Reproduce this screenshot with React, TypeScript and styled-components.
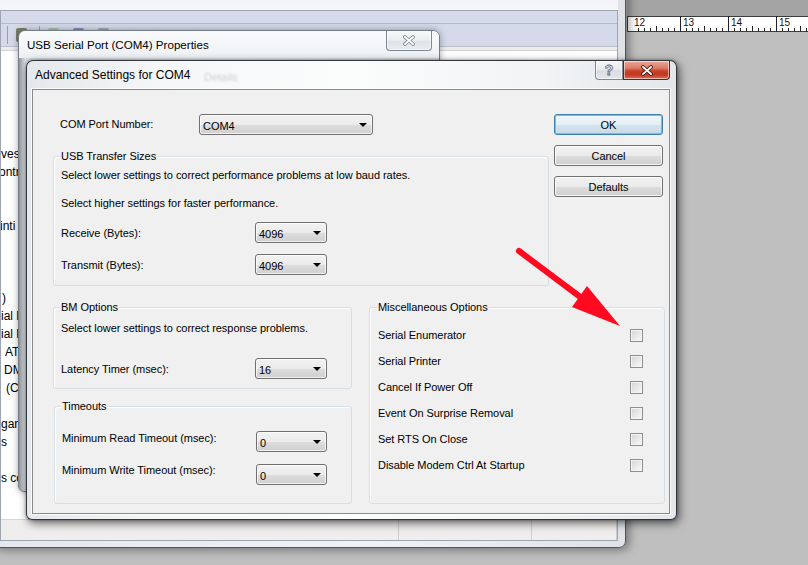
import React from 'react';
import styled, { createGlobalStyle } from 'styled-components';

const GlobalStyle = createGlobalStyle`
  *, *::before, *::after { box-sizing: border-box; }
  html, body { margin: 0; padding: 0; }
  body {
    background: #bfbfbf;
    font-family: 'Liberation Sans', Arial, sans-serif;
    font-size: 11px;
    color: #000;
  }
`;

const Desktop = styled.div`
  position: relative;
  width: 808px;
  height: 565px;
  overflow: hidden;
  background: #bfbfbf;
`;

/* document window with its ruler, behind everything on the right */
const DocArea = styled.div`
  position: absolute;
  left: 627px;
  top: 0;
  width: 181px;
  height: 565px;
  display: flex;
  flex-direction: column;
  background: #bfbfbf;
`;

const DocTop = styled.div`
  height: 16px;
  background: #a4a4a4;
`;

const RulerSvg = styled.svg`
  display: block;
  font-family: 'Liberation Sans', Arial, sans-serif;
`;

/* device manager window, far back */
const MgrWindow = styled.div`
  position: absolute;
  left: -8px;
  top: -20px;
  width: 634px;
  height: 568px;
  display: flex;
  flex-direction: column;
  padding: 0 7px 6px 7px;
  border: 1px solid #4f5560;
  border-radius: 7px;
  background: linear-gradient(90deg, #e4e8ed, #eff2f5 60%, #dfe3e8);
  box-shadow: 3px 2px 10px rgba(0, 0, 0, 0.4);
`;

const MgrTitleBar = styled.div`
  height: 29px;
  flex: none;
  background: linear-gradient(180deg, #e9edf2, #f6f7f9);
`;

const MgrClient = styled.div`
  flex: 1;
  display: flex;
  flex-direction: column;
  border: 1px solid #9ea5b1;
  background: #fff;
  overflow: hidden;
`;

const MenuBar = styled.div`
  height: 12px;
  flex: none;
  background: #d5dbeb;
`;

const Toolbar = styled.div`
  height: 24px;
  flex: none;
  display: flex;
  align-items: center;
  padding-left: 6px;
  border-top: 1px solid #b3bacb;
  border-bottom: 1px solid #bcc1ca;
  background: #d4daea;
`;

const ToolSep = styled.div<{ $ml?: number }>`
  width: 1px;
  height: 18px;
  margin-left: ${({ $ml }) => $ml ?? 0}px;
  background: #9aa1ae;
`;

const ToolIcon = styled.div<{ $color: string; $ml: number }>`
  width: 11px;
  height: 14px;
  margin-left: ${({ $ml }) => $ml}px;
  border-radius: 2px;
  background: ${({ $color }) => $color};
`;

const ToolbarFoot = styled.div`
  height: 4px;
  flex: none;
  background: #ececec;
  border-bottom: 1px solid #d2d2d2;
`;

const TreeList = styled.div`
  flex: 1;
  padding-top: 4px;
  background: #fff;
`;

const TreeRow = styled.div<{ $x: number }>`
  height: 18px;
  line-height: 18px;
  white-space: nowrap;
  font-size: 12px;
  text-indent: ${({ $x }) => $x}px;
`;

const StatusBar = styled.div`
  height: 21px;
  flex: none;
  display: flex;
  border-top: 1px solid #dad6d6;
  background: #f0eded;
`;

const StatusCell = styled.div<{ $w?: number }>`
  flex: ${({ $w }) => ($w ? `0 0 ${$w}px` : '1')};
  border-right: 1px solid #d0cccc;
`;

/* shared caption parts */
const TitleBar = styled.div<{ $h: number; $pl: number }>`
  position: relative;
  height: ${({ $h }) => $h}px;
  flex: none;
  display: flex;
  align-items: center;
  padding-left: ${({ $pl }) => $pl}px;
`;

const TitleText = styled.span<{ $size: number }>`
  font-size: ${({ $size }) => $size}px;
  color: #000;
  white-space: nowrap;
`;

const CaptionGroup = styled.div<{ $mr: number }>`
  margin-left: auto;
  margin-right: ${({ $mr }) => $mr}px;
  align-self: flex-start;
  display: flex;
`;

const CaptionButton = styled.div<{ $w: number; $h: number; $kind: 'close' | 'help' | 'idle'; $left?: boolean; $right?: boolean }>`
  width: ${({ $w }) => $w}px;
  height: ${({ $h }) => $h}px;
  display: flex;
  align-items: center;
  justify-content: center;
  border: 1px solid ${({ $kind }) => ($kind === 'close' ? '#5e2418' : '#7e8793')};
  border-top: none;
  border-radius: ${({ $left, $right }) => `0 0 ${$right ? 4 : 0}px ${$left ? 4 : 0}px`};
  background: ${({ $kind }) =>
    $kind === 'close'
      ? 'linear-gradient(180deg, #e9a99a 0%, #dc7c66 40%, #c8412a 55%, #c3381f 75%, #d8705a 100%)'
      : $kind === 'help'
      ? 'linear-gradient(180deg, #f4f5f7 0%, #e9ecef 45%, #d9dde2 55%, #e3e6ea 100%)'
      : 'linear-gradient(180deg, #f7f8fa 0%, #eceff2 45%, #e0e4e9 55%, #e9ecef 100%)'};
  box-shadow: inset 0 0 0 1px rgba(255, 255, 255, 0.55);
`;

const HelpGlyph = styled.span`
  font-family: 'Liberation Sans', Arial, sans-serif;
  font-weight: bold;
  font-size: 14px;
  line-height: 14px;
  color: #fff;
  -webkit-text-stroke: 0.8px #5f6368;
`;

const GhostText = styled.span`
  position: absolute;
  left: 172px;
  top: 10px;
  font-size: 11px;
  color: rgba(80, 80, 80, 0.25);
  filter: blur(1.2px);
`;

/* usb serial port properties window */
const PropsWindow = styled.div`
  position: absolute;
  left: 18px;
  top: 30px;
  width: 422px;
  height: 462px;
  display: flex;
  flex-direction: column;
  border: 1px solid #747c88;
  border-radius: 7px 7px 6px 6px;
  background: linear-gradient(90deg, #8e9399 0, #b9bdc2 3px, #d8dce1 6px, #e6e9ed 50%, #d8dce1 100%);
  box-shadow: 0 0 7px rgba(0, 0, 0, 0.35);
`;

const PropsCaption = styled(TitleBar)`
  background: linear-gradient(180deg, #f9fafc 0%, #eef1f4 100%);
  border-radius: 6px 6px 0 0;
`;

/* advanced settings dialog */
const Dialog = styled.div`
  position: absolute;
  left: 26px;
  top: 60px;
  width: 651px;
  height: 460px;
  display: flex;
  flex-direction: column;
  padding: 0 6px 5px 5px;
  border: 1px solid rgba(18, 22, 28, 0.85);
  border-radius: 7px 7px 6px 6px;
  background: linear-gradient(90deg, #e4e8ec 0%, #f5f6f8 20%, #fbfcfc 50%, #f1f3f5 80%, #e3e7eb 100%);
  box-shadow: 2px 3px 10px rgba(0, 0, 0, 0.6), 0 0 3px rgba(0, 0, 0, 0.35);
`;

const Client = styled.div`
  flex: 1;
  display: flex;
  flex-direction: column;
  padding: 24px 4px 0 20px;
  border: 1px solid #898989;
  background: #f0f0f0;
  box-shadow: 0 0 0 1px rgba(255, 255, 255, 0.8);
  letter-spacing: -0.05px;
`;

const TopRow = styled.div`
  display: flex;
  align-items: flex-start;
`;

const TopMain = styled.div`
  width: 496px;
  flex: none;
`;

const ButtonColumn = styled.div`
  width: 109px;
  margin-left: 5px;
  flex: none;
  display: flex;
  flex-direction: column;
  gap: 10px;
`;

const PushButton = styled.div<{ $default?: boolean }>`
  height: 21px;
  display: flex;
  align-items: center;
  justify-content: center;
  border: 1px solid ${({ $default }) => ($default ? '#3c7fb1' : '#707070')};
  border-radius: 3px;
  background: ${({ $default }) =>
    $default
      ? 'linear-gradient(180deg, #f0f7fb 0%, #e3eef5 50%, #d3e4ee 51%, #c6dbe8 100%)'
      : 'linear-gradient(180deg, #f2f2f2 0%, #ebebeb 50%, #dddddd 51%, #cfcfcf 100%)'};
  box-shadow: inset 0 0 0 1px ${({ $default }) => ($default ? '#63c6ef' : 'rgba(255,255,255,0.8)')};
  font-size: 11px;
`;

const FieldRow = styled.div<{ $mt?: number; $pl?: number }>`
  display: flex;
  align-items: center;
  margin-top: ${({ $mt }) => $mt ?? 0}px;
  padding-left: ${({ $pl }) => $pl ?? 0}px;
`;

const FieldLabel = styled.span<{ $w: number; $dy?: number }>`
  width: ${({ $w }) => $w}px;
  flex: none;
  line-height: 14px;
  white-space: nowrap;
  position: relative;
  top: ${({ $dy }) => $dy ?? 0}px;
`;

const Dropdown = styled.div<{ $w: number }>`
  width: ${({ $w }) => $w}px;
  height: 21px;
  flex: none;
  display: flex;
  align-items: center;
  justify-content: space-between;
  padding: 2px 5px 0 3px;
  border: 1px solid #707070;
  border-radius: 3px;
  background: linear-gradient(180deg, #f2f2f2 0%, #ebebeb 50%, #dddddd 51%, #cfcfcf 100%);
  box-shadow: inset 0 0 0 1px rgba(255, 255, 255, 0.75);
`;

const Caret = styled.span`
  width: 0;
  height: 0;
  margin-top: -1px;
  border-left: 4px solid transparent;
  border-right: 4px solid transparent;
  border-top: 4px solid #000;
`;

const GroupBox = styled.div`
  flex: none;
  border: 1px solid #d5dfe5;
  border-radius: 3px;
  box-shadow: inset 1px 1px 0 #fff;
`;

const GroupTitle = styled.div`
  width: fit-content;
  height: 13px;
  margin: -7px 0 0 -1px;
  padding: 0 1px;
  line-height: 13px;
  background: #f0f0f0;
  white-space: nowrap;
`;

const InfoText = styled.div<{ $mt: number }>`
  height: 14px;
  line-height: 14px;
  margin-top: ${({ $mt }) => $mt}px;
  white-space: nowrap;
`;

const UsbGroup = styled(GroupBox)`
  height: 130px;
  margin-top: 21px;
  padding: 0 0 10px 7px;
`;

const BottomRow = styled.div`
  display: flex;
  margin-top: 21px;
`;

const LeftColumn = styled.div`
  width: 299px;
  flex: none;
  display: flex;
  flex-direction: column;
`;

const BmGroup = styled(GroupBox)`
  height: 82px;
  padding-left: 7px;
`;

const TimeoutGroup = styled(GroupBox)`
  height: 98px;
  margin: 17px 0 0 1px;
  padding-left: 7px;
`;

const MiscGroup = styled(GroupBox)`
  width: 296px;
  height: 197px;
  margin-left: 17px;
  padding: 0 21px 0 8px;
`;

const MiscList = styled.div`
  margin-top: 8px;
`;

const MiscRow = styled.div`
  height: 26px;
  display: flex;
  align-items: center;
  justify-content: space-between;
  white-space: nowrap;
`;

const CheckBox = styled.span`
  width: 13px;
  height: 13px;
  flex: none;
  border: 1px solid #8f8f8f;
  background: linear-gradient(135deg, #d4d4d4 0%, #e9e9e9 55%, #f8f8f8 100%);
  box-shadow: inset 0 0 0 1px #f4f4f4;
`;

const Overlay = styled.svg`
  position: absolute;
  left: 0;
  top: 0;
  pointer-events: none;
`;

function Ruler() {
  const lines: React.ReactElement[] = [];
  const majors = [5, 53, 101, 149];
  majors.forEach((m) => {
    for (let k = 1; k < 8; k++) {
      const x = m + k * 6 + 0.5;
      const tall = k === 4;
      lines.push(<line key={`${m}-${k}`} x1={x} x2={x} y1={tall ? 10 : 12} y2={15} stroke="#222" strokeWidth={1} />);
    }
  });
  return (
    <RulerSvg width={181} height={16} viewBox="0 0 181 16">
      <rect x={0} y={0} width={181} height={16} fill="#fff" />
      <line x1={0} x2={181} y1={0.5} y2={0.5} stroke="#3c3c3c" />
      <line x1={0} x2={181} y1={15.5} y2={15.5} stroke="#3c3c3c" />
      <line x1={0.5} x2={0.5} y1={0} y2={16} stroke="#3c3c3c" />
      {[53, 101, 149].map((x) => (
        <line key={x} x1={x + 0.5} x2={x + 0.5} y1={0} y2={16} stroke="#222" />
      ))}
      {lines}
      <text x={7} y={10} fontSize={10} fill="#111">12</text>
      <text x={56} y={10} fontSize={10} fill="#111">13</text>
      <text x={104} y={10} fontSize={10} fill="#111">14</text>
      <text x={152} y={10} fontSize={10} fill="#111">15</text>
    </RulerSvg>
  );
}

function CloseGlyph({ outline, fill }: { outline: string; fill: string }) {
  return (
    <svg width="12" height="11" viewBox="0 0 12 11">
      <path d="M2 2 L10 9 M10 2 L2 9" stroke={outline} strokeWidth={3.6} strokeLinecap="square" />
      <path d="M2 2 L10 9 M10 2 L2 9" stroke={fill} strokeWidth={1.8} strokeLinecap="square" />
    </svg>
  );
}

const treeItems: Record<number, { text: string; x: number }> = {
  5: { text: 'ves', x: 0 },
  6: { text: 'ontr', x: -2 },
  9: { text: 'inti', x: -1 },
  13: { text: ')', x: 1 },
  14: { text: 'ial P', x: 0 },
  15: { text: 'ial P', x: 0 },
  16: { text: 'AT', x: 4 },
  17: { text: 'DM', x: 3 },
  18: { text: '(CO', x: 5 },
  20: { text: 'gan', x: 0 },
  21: { text: 's', x: 0 },
  23: { text: 's co', x: 0 },
};

const miscOptions = [
  'Serial Enumerator',
  'Serial Printer',
  'Cancel If Power Off',
  'Event On Surprise Removal',
  'Set RTS On Close',
  'Disable Modem Ctrl At Startup',
];

export default function App() {
  const rows = Array.from({ length: 24 }, (_, i) => treeItems[i] ?? { text: '', x: 0 });

  return (
    <>
      <GlobalStyle />
      <Desktop>
        <DocArea>
          <DocTop />
          <Ruler />
        </DocArea>

        <MgrWindow>
          <MgrTitleBar />
          <MgrClient>
            <MenuBar />
            <Toolbar>
              <ToolSep />
              <ToolIcon $color="#7b8068" $ml={8} />
              <ToolSep $ml={12} />
              <ToolIcon $color="#a9c49b" $ml={8} />
              <ToolIcon $color="#8b86c4" $ml={14} />
              <ToolIcon $color="#a3a6ad" $ml={14} />
            </Toolbar>
            <ToolbarFoot />
            <TreeList>
              {rows.map((r, i) => (
                <TreeRow key={i} $x={r.x}>{r.text}</TreeRow>
              ))}
            </TreeList>
            <StatusBar>
              <StatusCell $w={398} />
              <StatusCell $w={133} />
              <StatusCell />
            </StatusBar>
          </MgrClient>
        </MgrWindow>

        <PropsWindow>
          <PropsCaption $h={27} $pl={8}>
            <TitleText $size={11.6}>USB Serial Port (COM4) Properties</TitleText>
            <CaptionGroup $mr={7}>
              <CaptionButton $w={46} $h={20} $kind="idle" $left $right>
                <CloseGlyph outline="#8a8f96" fill="#fff" />
              </CaptionButton>
            </CaptionGroup>
          </PropsCaption>
        </PropsWindow>

        <Dialog>
          <TitleBar $h={28} $pl={3}>
            <TitleText $size={12}>Advanced Settings for COM4</TitleText>
            <GhostText>Details</GhostText>
            <CaptionGroup $mr={0}>
              <CaptionButton $w={28} $h={19} $kind="help" $left>
                <HelpGlyph>?</HelpGlyph>
              </CaptionButton>
              <CaptionButton $w={47} $h={19} $kind="close" $right>
                <CloseGlyph outline="#4a1a12" fill="#fff" />
              </CaptionButton>
            </CaptionGroup>
          </TitleBar>

          <Client>
            <TopRow>
              <TopMain>
                <FieldRow $pl={7}>
                  <FieldLabel $w={139} $dy={-1}>COM Port Number:</FieldLabel>
                  <Dropdown $w={174}>
                    <span>COM4</span>
                    <Caret />
                  </Dropdown>
                </FieldRow>

                <UsbGroup>
                  <GroupTitle>USB Transfer Sizes</GroupTitle>
                  <InfoText $mt={5}>Select lower settings to correct performance problems at low baud rates.</InfoText>
                  <InfoText $mt={14}>Select higher settings for faster performance.</InfoText>
                  <FieldRow $mt={12}>
                    <FieldLabel $w={194}>Receive (Bytes):</FieldLabel>
                    <Dropdown $w={72}>
                      <span>4096</span>
                      <Caret />
                    </Dropdown>
                  </FieldRow>
                  <FieldRow $mt={11}>
                    <FieldLabel $w={194}>Transmit (Bytes):</FieldLabel>
                    <Dropdown $w={72}>
                      <span>4096</span>
                      <Caret />
                    </Dropdown>
                  </FieldRow>
                </UsbGroup>
              </TopMain>

              <ButtonColumn>
                <PushButton $default>OK</PushButton>
                <PushButton>Cancel</PushButton>
                <PushButton>Defaults</PushButton>
              </ButtonColumn>
            </TopRow>

            <BottomRow>
              <LeftColumn>
                <BmGroup>
                  <GroupTitle>BM Options</GroupTitle>
                  <InfoText $mt={7}>Select lower settings to correct response problems.</InfoText>
                  <FieldRow $mt={23}>
                    <FieldLabel $w={194}>Latency Timer (msec):</FieldLabel>
                    <Dropdown $w={72}>
                      <span>16</span>
                      <Caret />
                    </Dropdown>
                  </FieldRow>
                </BmGroup>

                <TimeoutGroup>
                  <GroupTitle>Timeouts</GroupTitle>
                  <FieldRow $mt={18}>
                    <FieldLabel $w={194} $dy={-4}>Minimum Read Timeout (msec):</FieldLabel>
                    <Dropdown $w={71}>
                      <span>0</span>
                      <Caret />
                    </Dropdown>
                  </FieldRow>
                  <FieldRow $mt={12}>
                    <FieldLabel $w={194} $dy={-5}>Minimum Write Timeout (msec):</FieldLabel>
                    <Dropdown $w={71}>
                      <span>0</span>
                      <Caret />
                    </Dropdown>
                  </FieldRow>
                </TimeoutGroup>
              </LeftColumn>

              <MiscGroup>
                <GroupTitle>Miscellaneous Options</GroupTitle>
                <MiscList>
                  {miscOptions.map((o) => (
                    <MiscRow key={o}>
                      <span>{o}</span>
                      <CheckBox />
                    </MiscRow>
                  ))}
                </MiscList>
              </MiscGroup>
            </BottomRow>
          </Client>
        </Dialog>

        <Overlay width={808} height={565} viewBox="0 0 808 565">
          <line x1={519} y1={251} x2={583} y2={299} stroke="#ff0a1e" strokeWidth={6} strokeLinecap="round" />
          <polygon points="587,286 572,307 620,326" fill="#ff0a1e" />
        </Overlay>
      </Desktop>
    </>
  );
}
